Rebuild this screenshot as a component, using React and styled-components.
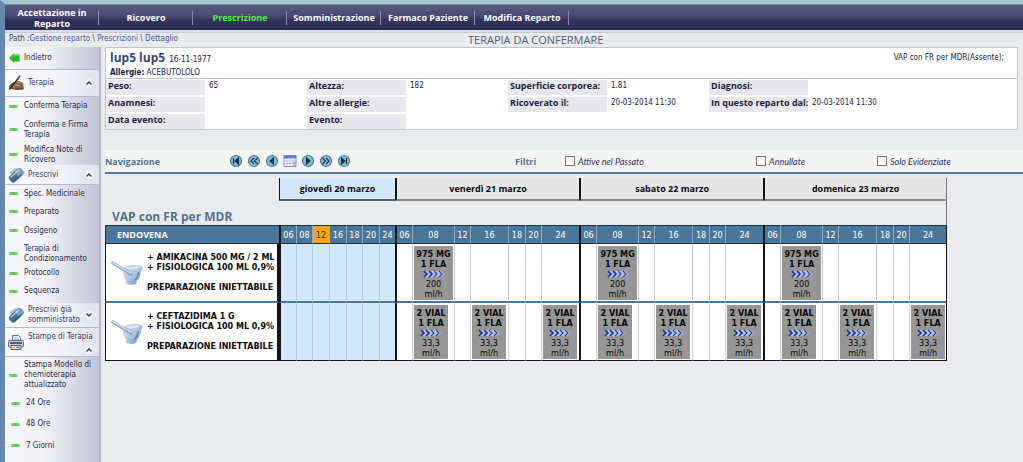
import React from "react";
import styled, { createGlobalStyle, css } from "styled-components";

const sans = `"Open Sans", "Noto Sans", sans-serif`;
const tahoma = `"DejaVu Sans Condensed", "DejaVu Sans", sans-serif`;
const verdana = `"DejaVu Sans", sans-serif`;

const GlobalStyle = createGlobalStyle`
  * {
    box-sizing: border-box;
  }
  body {
    margin: 0;
    background: #eaebec;
    font-family: ${sans};
    font-size: 9px;
    color: #1c1c44;
  }
  a {
    color: inherit;
    text-decoration: none;
  }
`;

const Page = styled.div`
  display: flex;
  flex-direction: column;
  min-height: 100vh;
  border-top: 4px solid #a9c9d6;
  border-left: 5px solid #6787b1;
`;

const TopNav = styled.nav`
  display: flex;
  height: 28px;
  border-top: 1px solid #77809a;
  border-bottom: 2px solid #dcdfec;
  background: linear-gradient(#5d5d80 0%, #454570 50%, #33335b 58%, #2f2f56 100%);
`;

const TopLink = styled.a`
  display: flex;
  align-items: center;
  justify-content: center;
  width: 94px;
  padding: 0 4px;
  font-size: 9px;
  line-height: 11px;
  font-weight: bold;
  text-align: center;
  color: ${(p) => (p.$active ? "#5bea4c" : "#ffffff")};
  background: linear-gradient(#8c8cab, #8c8cab) right center / 1px 14px no-repeat;
`;

const PathBar = styled.div`
  display: grid;
  grid-template-columns: 459px 1fr;
  align-items: center;
  height: 15px;
  padding-left: 4px;
  border-top: 1px solid #c6c9d6;
`;

const Breadcrumb = styled.div`
  margin-top: -4px;
  font-family: ${tahoma};
  font-size: 8px;
  line-height: 11px;
  color: #44445c;
  a {
    color: #4858a8;
  }
`;

const PageTitle = styled.h1`
  margin: 0;
  font-size: 11px;
  line-height: 14px;
  font-weight: normal;
  color: #50627f;
`;

const Body = styled.div`
  display: flex;
  flex: 1;
`;

const Sidebar = styled.aside`
  flex: 0 0 96px;
  min-width: 0;
  border-right: 2px solid #b4b6c8;
  background: linear-gradient(90deg, #f7f7fb 0%, #f2f2f8 42%, #c6c7d8 96%, #c0c1d2 100%);
  font-family: ${tahoma};
  font-size: 8px;
  line-height: 10px;
  color: #2a2a44;
`;

const Group = styled.div`
  display: flex;
  align-items: center;
  gap: 4px;
  height: ${(p) => p.$height}px;
  padding: 0 4px 0 3px;
  border-bottom: 1px solid #b9bacb;
  background: linear-gradient(90deg, #fafafd, #f3f3fa 60%, #e2e2f1);
  color: #3a3a66;
  svg {
    flex: none;
  }
  span {
    flex: 1;
    min-width: 0;
    align-self: ${(p) => (p.$top ? "flex-start" : "center")};
    padding-top: ${(p) => (p.$top ? "4px" : "0")};
    margin-right: ${(p) => (p.$top ? "-16px" : "0")};
    white-space: ${(p) => (p.$top ? "nowrap" : "normal")};
  }
`;

const Toggle = styled.button`
  display: flex;
  flex: none;
  align-items: center;
  justify-content: center;
  align-self: ${(p) => (p.$low ? "flex-end" : "center")};
  width: 12px;
  height: 12px;
  padding: 0;
  border: 0;
  border-radius: 6px;
  background: radial-gradient(#ffffff 20%, #ccccec 100%);
`;

const SideLink = styled.a`
  display: flex;
  align-items: center;
  gap: 6px;
  height: ${(p) => p.$height}px;
  padding-left: ${(p) => (p.$indent ? "6px" : "4px")};
`;

const Dash = styled.i`
  flex: none;
  width: 9px;
  height: 3px;
  border-radius: 1px;
  background: linear-gradient(90deg, #8fd986, #4fc845 50%, #8fd986);
`;

const Back = styled.a`
  display: flex;
  align-items: center;
  gap: 4px;
  height: 23px;
  padding: 0 4px;
  border-bottom: 1px solid #b9bacb;
`;

const Main = styled.main`
  flex: 1;
  min-width: 0;
  padding-left: 4px;
`;

const PatientBox = styled.section`
  height: 83px;
  margin-right: 5px;
  border: 1px solid #c0c4da;
  background: #ffffff;
`;

const PatientHead = styled.header`
  display: flex;
  justify-content: space-between;
  height: 31px;
  padding: 2px 13px 0 4px;
  border-bottom: 1px solid #c0c4da;
`;

const PatientName = styled.h2`
  margin: 0;
  font-size: 12px;
  line-height: 15px;
  color: #41466c;
  small {
    margin-left: 1px;
    font-family: ${tahoma};
    font-size: 8px;
    font-weight: normal;
    color: #1c1c44;
  }
`;

const Allergies = styled.div`
  font-family: ${tahoma};
  font-size: 8px;
  line-height: 12px;
`;

const Protocol = styled.div`
  padding-top: 2px;
  font-family: ${tahoma};
  font-size: 8px;
  line-height: 11px;
`;

const InfoGrid = styled.dl`
  display: grid;
  grid-template-columns: repeat(4, 99px 102px);
  row-gap: 2px;
  margin: 0;
  padding-top: 1px;
  font-size: 9px;
  line-height: 12px;
  dt {
    height: 15px;
    padding-left: 2px;
    background: #e8e7ed;
    font-weight: bold;
    white-space: nowrap;
  }
  dd {
    margin: 0;
    padding-left: 4px;
    font-family: ${tahoma};
    font-size: 8px;
  }
`;

const Toolbar = styled.div`
  display: grid;
  grid-template-columns: 124px 286px 50px 191px 121px 1fr;
  align-items: center;
  height: 24px;
  margin-top: 20px;
  border-bottom: 2px solid #52799a;
  background: #f4f5f5;
  color: #4f7596;
`;

const NavButtons = styled.div`
  display: flex;
  gap: 4px;
`;

const RoundButton = styled.button`
  width: 14px;
  height: 14px;
  padding: 0;
  border: 0;
  background: none;
  svg {
    display: block;
  }
`;

const Filter = styled.label`
  display: flex;
  align-items: center;
  gap: 3px;
  font-family: Lato, ${sans};
  font-size: 9px;
  font-style: italic;
  color: #33305c;
  input {
    appearance: none;
    width: 10px;
    height: 10px;
    margin: 0;
    border: 1px solid #77777c;
    background: #ffffff;
  }
`;

const Schedule = styled.table`
  margin-top: 4px;
  table-layout: fixed;
  width: min-content;
  border-collapse: separate;
  border-spacing: 0;
  color: #0a0a0a;
  th,
  td {
    padding: 0;
  }
`;

const black = css`
  border-left: 2px solid #15151a;
`;

const DayHead = styled.th`
  height: 23px;
  ${black}
  border-left-width: ${(p) => (p.$today ? "1px" : "2px")};
  border-right: ${(p) => (p.$last ? "1px solid #77777c" : "0")};
  border-bottom: 2px solid ${(p) => (p.$today ? "#55606a" : "#858585")};
  background: ${(p) => (p.$today ? "#d3e8fa" : "#e6e6e6")};
  font-size: 9px;
`;

const GroupTitle = styled.th`
  height: 24px;
  padding: 8px 0 0 7px !important;
  border-right: 1px solid #77777c;
  font-size: 12px;
  line-height: 15px;
  text-align: left;
  vertical-align: top;
  color: #4f7596;
`;

const RouteHead = styled.th`
  height: 19px;
  padding-left: 11px !important;
  border: 1px solid #20303e;
  border-width: 1px 0 1px 1px;
  background: #4a7699;
  font-size: 9px;
  text-align: left;
  color: #ffffff;
`;

const HourHead = styled.th`
  height: 19px;
  border-top: 1px solid #20303e;
  border-bottom: 1px solid #20303e;
  border-left: 1px solid #8fabc2;
  ${(p) => p.$first && black}
  border-right: ${(p) => (p.$last ? "1px solid #15151a" : "0")};
  background: ${(p) => (p.$now ? "#fba50c" : "#4a7699")};
  font-family: ${tahoma};
  font-size: 9px;
  font-weight: normal;
  color: ${(p) => (p.$now ? "#3c2a10" : "#ffffff")};
`;

const DrugCell = styled.td`
  height: ${(p) => (p.$last ? "58px" : "59px")};
  border-left: 1px solid #15151a;
  border-right: 2px solid #15151a;
  border-bottom: ${(p) => (p.$last ? "1px solid #15151a" : "2px solid #4a7699")};
  background: #ffffff;
`;

const Drug = styled.div`
  display: flex;
  align-items: center;
  gap: 4px;
  padding-left: 5px;
  font-family: ${verdana};
  font-size: 8px;
  line-height: 10px;
  font-weight: bold;
  white-space: nowrap;
  p {
    margin: 0 0 10px;
  }
`;

const Slot = styled.td`
  border-left: 1px solid ${(p) => (p.$today ? "#b4cce0" : "#cdcdcd")};
  ${(p) => p.$first && black}
  border-right: ${(p) => (p.$edge ? "1px solid #15151a" : "0")};
  border-bottom: ${(p) => (p.$last ? "1px solid #15151a" : "2px solid #4a7699")};
  background: ${(p) => (p.$today ? "#d3e8fa" : "#ffffff")};
`;

const Dose = styled.div`
  width: ${(p) => (p.$wide ? "39px" : "34px")};
  height: 54px;
  margin-left: 1px;
  padding-top: 3px;
  background: #969696;
  font-family: ${tahoma};
  font-size: 9px;
  line-height: 10px;
  text-align: center;
  b {
    display: block;
    white-space: nowrap;
  }
  svg {
    display: block;
    margin: 0 auto;
  }
`;

const Chevron = ({ down }) => (
  <svg width="8" height="8" viewBox="0 0 8 8" fill="none" stroke="#34345c" strokeWidth="1.4">
    <path d={down ? "M1.5 2.5 4 5l2.5-2.5" : "M1.5 5.5 4 3l2.5 2.5"} />
  </svg>
);

const BackArrow = () => (
  <svg width="11" height="10" viewBox="0 0 11 10">
    <path d="M0 5 5 0v1.500h5.500v7H5V10z" fill="#27bd1e" />
    <path d="M2 5 4.500 2.600H10" fill="none" stroke="#62dc50" />
  </svg>
);

const HandIcon = () => (
  <svg width="16" height="16" viewBox="0 0 16 16">
    <path d="M1 11c2-3 4-4 6-4l4-1 4 2 1 6-8 1-5-1-2 1z" fill="#8b6242" />
    <path d="M5 10c3-3 6-3 8-1M4 12l5-2 3 1" fill="none" stroke="#c39b72" />
    <path d="M7 14h8" stroke="#4a3527" />
    <path d="M2 14 12 1" stroke="#2b2623" strokeWidth="1.4" />
    <path d="M9 4 12 0" stroke="#85766a" />
  </svg>
);

const PillIcon = () => (
  <svg width="16" height="16" viewBox="0 0 16 16">
    <path d="M3 6 8 2.500" stroke="#a9c0d3" strokeWidth="3" strokeLinecap="round" />
    <g transform="rotate(-42 8 8)">
      <rect x="0" y="4.500" width="16" height="8" rx="3" fill="#44708f" />
      <path d="M9 4.500h4a3 3 0 0 1 3 3v2a3 3 0 0 1-3 3H9z" fill="#7fa3bd" />
      <path d="M2.500 6.200h11" stroke="#c6dae7" strokeWidth="1.200" />
      <path d="M2.500 11.200h10" stroke="#2d5069" />
    </g>
  </svg>
);

const PrinterIcon = () => (
  <svg width="16" height="16" viewBox="0 0 16 16">
    <path d="M4.500 7V1.500h6l2 2V7z" fill="#eaf2ff" stroke="#4b7cc8" />
    <path d="M6 4h4M6 5.500h5" stroke="#8fb1e4" strokeWidth=".7" />
    <rect x=".5" y="6.500" width="15" height="6.500" rx="1" fill="#c8cbd4" stroke="#6a6e80" />
    <path d="M2 9h12" stroke="#34343d" strokeWidth="1.500" />
    <path d="M3 11.500h10v4H3z" fill="#fffbe0" stroke="#5b5d66" />
    <path d="M4 13.500h3" stroke="#e8b92d" strokeWidth="1.500" />
    <path d="M8 13.500h4" stroke="#4f77c9" strokeWidth="1.500" />
  </svg>
);

const MortarIcon = () => (
  <svg width="32" height="26" viewBox="0 0 32 26">
    <defs>
      <linearGradient id="bowl" x1="0" y1="0" x2="1" y2="1">
        <stop offset="0" stopColor="#dce8f5" />
        <stop offset=".5" stopColor="#adc6e2" />
        <stop offset="1" stopColor="#6c8fbc" />
      </linearGradient>
    </defs>
    <path
      d="M12 9c2-4 13-5 19-2.500l.8 2-1.800 3c-.5 5-2.500 8-4.500 10l.5 1.500c-2 2.500-9 2.700-11 .3l.5-2.300C12.500 18 11.500 14 12 9z"
      fill="url(#bowl)"
    />
    <path d="M13 8.500c4-3.500 13-3.500 17-1.500-3 3-12 4-17 1.500z" fill="#d9e6f4" stroke="#a3bcd9" strokeWidth=".6" />
    <path d="M2 3 20 14" stroke="#7b99c0" strokeWidth="3.200" strokeLinecap="round" />
    <path d="M2 2.700 20 13.400" stroke="#cfddee" strokeWidth="1.600" strokeLinecap="round" />
    <path d="M27.500 12c-.5 4-2 6.500-4 8.500" fill="none" stroke="#6485b2" strokeWidth="1.300" />
  </svg>
);

const CalendarIcon = () => (
  <svg width="14" height="14" viewBox="0 0 14 14">
    <rect x="1" y="1.500" width="12" height="11" fill="#ffffff" stroke="#7d90c0" />
    <rect x="1" y="1.500" width="12" height="3" fill="#5f7fca" />
    <path d="M1 7h12M1 9.500h12M4 4.500v8M7 4.500v8M10 4.500v8" stroke="#a9b3d4" strokeWidth=".8" />
    <path d="M10.500 8.500h2M10.500 11h2" stroke="#d88a80" strokeWidth="1.600" />
  </svg>
);

const roundPaths = {
  first: "M4.500 4v6M9.500 4 6 7l3.500 3z",
  fastBack: "M7 4 4 7l3 3M10.500 4l-3 3 3 3",
  back: "M8.500 4 5 7l3.500 3z",
  forward: "M5.500 4 9 7l-3.500 3z",
  fastForward: "M3.500 4l3 3-3 3M7 4l3 3-3 3",
  last: "M9.500 4v6M4.500 4 8 7l-3.500 3z",
};

const RoundIcon = ({ name }) => (
  <svg width="14" height="14" viewBox="0 0 14 14">
    <circle cx="7" cy="7" r="5.500" fill="#86bad3" stroke="#467f9e" strokeWidth="1.200" />
    <path
      d={roundPaths[name]}
      fill={name.startsWith("fast") ? "none" : "#123350"}
      stroke="#123350"
      strokeWidth="1.100"
    />
  </svg>
);

const FlowIcon = () => (
  <svg width="22" height="10" viewBox="0 0 22 10" fill="none">
    <path d="M1 2h17l3 3-3 3H1l2.500-3z" fill="#b4c2ea" />
    <path d="M1 2l3 3-3 3M6 2l3 3-3 3" stroke="#1a2fa6" strokeWidth="1.700" />
    <path d="M11 2l3 3-3 3M16 2l3 3-3 3" stroke="#33417c" strokeWidth="1.100" />
  </svg>
);

const topLinks = [
  "Accettazione in Reparto",
  "Ricovero",
  "Prescrizione",
  "Somministrazione",
  "Farmaco Paziente",
  "Modifica Reparto",
];

const sideGroups = [
  {
    title: "Terapia",
    icon: HandIcon,
    height: 27,
    links: [
      ["Conferma Terapia", 18],
      ["Conferma e Firma Terapia", 29],
      ["Modifica Note di Ricovero", 21],
    ],
  },
  {
    title: "Prescrivi",
    icon: PillIcon,
    height: 20,
    links: [
      ["Spec. Medicinale", 17],
      ["Preparato", 19],
      ["Ossigeno", 19],
      ["Terapia di Condizionamento", 27],
      ["Protocollo", 12],
      ["Sequenza", 24],
    ],
  },
  { title: "Prescrivi già somministrato", icon: PillIcon, height: 25, closed: true, links: [] },
  {
    title: "Stampe di Terapia",
    icon: PrinterIcon,
    height: 29,
    top: true,
    indent: true,
    links: [
      ["Stampa Modello di chemioterapia attualizzato", 36],
      ["24 Ore", 20],
      ["48 Ore", 22],
      ["7 Giorni", 21],
    ],
  },
];

const info = [
  ["Peso:", "65"],
  ["Altezza:", "182"],
  ["Superficie corporea:", "1.81"],
  ["Diagnosi:", ""],
  ["Anamnesi:", ""],
  ["Altre allergie:", ""],
  ["Ricoverato il:", "20-03-2014 11:30"],
  ["In questo reparto dal:", "20-03-2014 11:30"],
  ["Data evento:", ""],
  ["Evento:", ""],
];

const hours = ["06", "08", "12", "16", "18", "20", "24"];
const todayWidths = [17, 16, 17, 17, 16, 17, 16];
const dayWidths = [17, 42, 16, 38, 17, 16, 38];

const days = [
  { name: "giovedì 20 marzo", today: true, widths: todayWidths },
  { name: "venerdì 21 marzo", widths: dayWidths },
  { name: "sabato 22 marzo", widths: dayWidths },
  { name: "domenica 23 marzo", widths: dayWidths },
];

const drugs = [
  {
    lines: ["+ AMIKACINA 500 MG / 2 ML", "+ FISIOLOGICA 100 ML 0,9%"],
    dose: "975 MG",
    rate: "200",
    at: ["08"],
    wide: true,
  },
  {
    lines: ["+ CEFTAZIDIMA 1 G", "+ FISIOLOGICA 100 ML 0,9%"],
    dose: "2 VIAL",
    rate: "33,3",
    at: ["08", "16", "24"],
  },
];

const navBefore = [
  ["first", "Inizio"],
  ["fastBack", "Indietro veloce"],
  ["back", "Precedente"],
];
const navAfter = [
  ["forward", "Successivo"],
  ["fastForward", "Avanti veloce"],
  ["last", "Fine"],
];

function SideMenu() {
  return (
    <Sidebar>
      <Back href="#">
        <BackArrow />
        Indietro
      </Back>
      {sideGroups.map((group) => (
        <React.Fragment key={group.title}>
          <Group $height={group.height} $top={group.top}>
            <group.icon />
            <span>{group.title}</span>
            <Toggle type="button" aria-label={group.title} $low={group.top}>
              <Chevron down={group.closed} />
            </Toggle>
          </Group>
          {group.links.map(([text, height], i) => (
            <SideLink key={text} href="#" $height={height} $indent={group.indent && i > 0}>
              <Dash />
              {text}
            </SideLink>
          ))}
        </React.Fragment>
      ))}
    </Sidebar>
  );
}

function Patient() {
  return (
    <PatientBox>
      <PatientHead>
        <div>
          <PatientName>
            lup5 lup5 <small>16-11-1977</small>
          </PatientName>
          <Allergies>
            <b>Allergie:</b> ACEBUTOLOLO
          </Allergies>
        </div>
        <Protocol>VAP con FR per MDR(Assente);</Protocol>
      </PatientHead>
      <InfoGrid>
        {info.map(([label, value]) => (
          <React.Fragment key={label}>
            <dt>{label}</dt>
            <dd>{value}</dd>
          </React.Fragment>
        ))}
      </InfoGrid>
    </PatientBox>
  );
}

function NavButton({ item: [name, label] }) {
  return (
    <RoundButton type="button" aria-label={label}>
      <RoundIcon name={name} />
    </RoundButton>
  );
}

function ScheduleTable() {
  return (
    <Schedule>
      <colgroup>
        <col width={174} />
        {days.map((day) => day.widths.map((w, i) => <col key={day.name + i} width={w} />))}
      </colgroup>
      <thead>
        <tr>
          <td />
          {days.map((day, i) => (
            <DayHead key={day.name} colSpan={7} $today={day.today} $last={i === 3}>
              {day.name}
            </DayHead>
          ))}
        </tr>
        <tr>
          <GroupTitle colSpan={29}>VAP con FR per MDR</GroupTitle>
        </tr>
        <tr>
          <RouteHead>ENDOVENA</RouteHead>
          {days.map((day, d) =>
            hours.map((hour, i) => (
              <HourHead
                key={day.name + hour}
                $first={i === 0}
                $last={d === 3 && i === 6}
                $now={day.today && hour === "12"}
              >
                {hour}
              </HourHead>
            ))
          )}
        </tr>
      </thead>
      <tbody>
        {drugs.map((drug, row) => (
          <tr key={drug.dose}>
            <DrugCell $last={row === 1}>
              <Drug>
                <MortarIcon />
                <div>
                  <p>
                    {drug.lines[0]}
                    <br />
                    {drug.lines[1]}
                  </p>
                  PREPARAZIONE INIETTABILE
                </div>
              </Drug>
            </DrugCell>
            {days.map((day, d) =>
              hours.map((hour, i) => (
                <Slot
                  key={day.name + hour}
                  $today={day.today}
                  $first={i === 0}
                  $edge={d === 3 && i === 6}
                  $last={row === 1}
                >
                  {!day.today && drug.at.includes(hour) && (
                    <Dose $wide={drug.wide}>
                      <b>{drug.dose}</b>
                      <b>1 FLA</b>
                      <FlowIcon />
                      {drug.rate}
                      <br />
                      ml/h
                    </Dose>
                  )}
                </Slot>
              ))
            )}
          </tr>
        ))}
      </tbody>
    </Schedule>
  );
}

function App() {
  return (
    <Page>
      <GlobalStyle />
      <TopNav>
        {topLinks.map((text) => (
          <TopLink key={text} href="#" $active={text === "Prescrizione"}>
            {text}
          </TopLink>
        ))}
      </TopNav>
      <PathBar>
        <Breadcrumb>
          Path :<a href="#">Gestione reparto</a> \ <a href="#">Prescrizioni</a> \{" "}
          <a href="#">Dettaglio</a>
        </Breadcrumb>
        <PageTitle>TERAPIA DA CONFERMARE</PageTitle>
      </PathBar>
      <Body>
        <SideMenu />
        <Main>
          <Patient />
          <Toolbar>
            <b>Navigazione</b>
            <NavButtons>
              {navBefore.map((item) => (
                <NavButton key={item[0]} item={item} />
              ))}
              <RoundButton type="button" aria-label="Calendario">
                <CalendarIcon />
              </RoundButton>
              {navAfter.map((item) => (
                <NavButton key={item[0]} item={item} />
              ))}
            </NavButtons>
            <b>Filtri</b>
            <Filter>
              <input type="checkbox" />
              Attive nel Passato
            </Filter>
            <Filter>
              <input type="checkbox" />
              Annullate
            </Filter>
            <Filter>
              <input type="checkbox" />
              Solo Evidenziate
            </Filter>
          </Toolbar>
          <ScheduleTable />
        </Main>
      </Body>
    </Page>
  );
}

export default App;
